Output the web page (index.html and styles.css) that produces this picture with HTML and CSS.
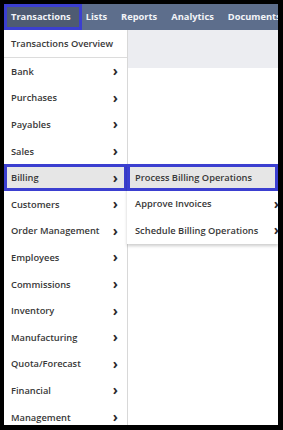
FILE: index.html
```html
<!DOCTYPE html>
<html>
<head>
<meta charset="utf-8">
<title>Transactions menu</title>
<link rel="stylesheet" href="styles.css">
</head>
<body>
<div class="frame">
	<nav class="topnav">
		<span class="tab active">Transactions</span>
		<span class="tab">Lists</span>
		<span class="tab">Reports</span>
		<span class="tab">Analytics</span>
		<span class="tab">Documents</span>
	</nav>
	<div class="page">
		<ul class="menu">
			<li class="overview">Transactions Overview</li>
			<li>Bank<i class="chev">&rsaquo;</i></li>
			<li>Purchases<i class="chev">&rsaquo;</i></li>
			<li>Payables<i class="chev">&rsaquo;</i></li>
			<li>Sales<i class="chev">&rsaquo;</i></li>
			<li class="hot">Billing<i class="chev">&rsaquo;</i></li>
			<li>Customers<i class="chev">&rsaquo;</i></li>
			<li>Order Management<i class="chev">&rsaquo;</i></li>
			<li>Employees<i class="chev">&rsaquo;</i></li>
			<li>Commissions<i class="chev">&rsaquo;</i></li>
			<li>Inventory<i class="chev">&rsaquo;</i></li>
			<li>Manufacturing<i class="chev">&rsaquo;</i></li>
			<li>Quota/Forecast<i class="chev">&rsaquo;</i></li>
			<li>Financial<i class="chev">&rsaquo;</i></li>
			<li>Management<i class="chev">&rsaquo;</i></li>
		</ul>
		<div class="content">
			<div class="band"></div>
		</div>
		<ul class="submenu">
			<li class="hot">Process Billing Operations</li>
			<li>Approve Invoices<i class="chev">&rsaquo;</i></li>
			<li>Schedule Billing Operations<i class="chev">&rsaquo;</i></li>
		</ul>
	</div>
</div>
</body>
</html>
```

FILE: styles.css
```css
body {
	margin: 0;
	background: #000;
	font-family: "Open Sans", "DejaVu Sans", sans-serif;
}
.frame {
	margin: 4px 5px 0 4px;
	height: 421px;
	background: #fff;
	overflow: hidden;
	display: flex;
	flex-direction: column;
}
.topnav {
	height: 26px;
	background: #5d6e8c;
	display: flex;
	align-items: center;
	flex-shrink: 0;
	white-space: nowrap;
}
.tab {
	color: #f2f4f8;
	font-size: 9.3px;
	font-weight: 700;
	padding: 0 10px 0 4px;
	line-height: 26px;
}
.tab.active {
	background: #4e5b72;
	box-shadow: inset 0 0 0 3px #3b3fd0;
	padding: 0 11px 0 7px;
}
.page {
	position: relative;
	flex: 1;
	display: flex;
}
.menu, .submenu {
	list-style: none;
	margin: 0;
	padding: 0;
	background: #fff;
}
.menu {
	width: 123px;
	flex-shrink: 0;
	border-right: 1px solid #d8d8d8;
}
.menu li, .submenu li {
	height: 26.6px;
	display: flex;
	align-items: center;
	justify-content: space-between;
	padding: 0 9px 0 7px;
	font-size: 9.3px;
	font-weight: 600;
	color: #383838;
	white-space: nowrap;
}
.menu li.overview {
	height: 27px;
	border-bottom: 1px solid #dcdcdc;
}
.chev {
	font-style: normal;
	font-weight: 700;
	font-size: 14px;
	color: #2a2a2a;
	line-height: 1;
}
li.hot {
	background: #e6e6e6;
	box-shadow: inset 0 0 0 3px #3b3fd0;
}
.content {
	flex: 1;
	background: #fff;
}
.band {
	height: 38px;
	background: #ecedf1;
}
.submenu {
	position: absolute;
	left: 123px;
	top: 134px;
	width: 151px;
	box-shadow: 0 2px 3px rgba(0, 0, 0, 0.2);
}
.submenu li {
	padding: 0 0 0 8px;
}
.submenu li .chev {
	margin-right: -1px;
}
```
